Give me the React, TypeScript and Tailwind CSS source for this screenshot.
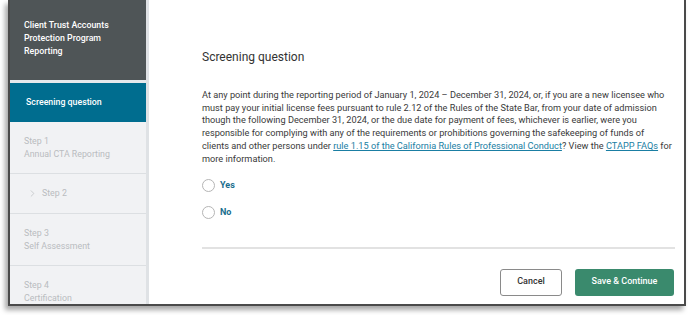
import React, { useState } from 'react';
import { ChevronRight } from 'lucide-react';

const steps = [
    { title: 'Step 1', sub: 'Annual CTA Reporting' },
    { title: 'Step 2', sub: '', chevron: true },
    { title: 'Step 3', sub: 'Self Assessment' },
    { title: 'Step 4', sub: 'Certification' },
];

const App: React.FC = () => {
    const [answer, setAnswer] = useState<'yes' | 'no' | null>(null);

    return (
        <div className="w-[688px] h-[315px] bg-white overflow-hidden font-['Roboto',sans-serif]">
            <div className="ml-[8px] w-[678px] h-[306px] flex border-x-2 border-b-2 border-[#4a4a4a] shadow-[-3px_4px_5px_rgba(0,0,0,0.35)] overflow-hidden">
                {/* Sidebar */}
                <div className="w-[139px] shrink-0 flex flex-col bg-[#f1f2f4] border-r-[3px] border-[#dfe2e5]">
                    <div className="h-[80px] shrink-0 bg-[#4f5557] pl-[14px] pt-[19px] text-[8.8px] leading-[13px] font-medium text-white">
                        Client Trust Accounts<br />Protection Program<br />Reporting
                    </div>
                    <div className="h-[3px] shrink-0 bg-[#e6e9ec]"></div>
                    <div className="h-[39px] shrink-0 bg-[#006d8f] pl-[16px] flex items-center text-[8.8px] font-medium text-white">
                        Screening question
                    </div>
                    {steps.map((s, idx) => (
                        <div
                            key={s.title}
                            className={`shrink-0 text-[8.8px] leading-[13px] text-[#b9bcbf] ${idx < steps.length - 1 ? 'border-b border-[#dcdfe2]' : ''} ${s.chevron ? 'h-[40px] flex items-center pl-[17px] gap-[4px]' : 'h-[52px] pl-[14px] pt-[13px]'}`}
                        >
                            {s.chevron && <ChevronRight className="w-[11px] h-[11px] text-[#b9bcbf]" strokeWidth={1.5} />}
                            <div>{s.title}</div>
                            {s.sub && <div>{s.sub}</div>}
                        </div>
                    ))}
                </div>

                {/* Main */}
                <div className="flex-1 bg-white pl-[53px] pr-[9px] pt-[48px]">
                    <h1 className="text-[12px] leading-[18px] text-[#333]">Screening question</h1>
                    <p className="mt-[23px] max-w-[471px] text-[9.2px] leading-[12.7px] text-[#3a3a3a]">
                        At any point during the reporting period of January 1, 2024 – December 31, 2024, or, if you are a new licensee who must pay your initial license fees pursuant to rule 2.12 of the Rules of the State Bar, from your date of admission though the following December 31, 2024, or the due date for payment of fees, whichever is earlier, were you responsible for complying with any of the requirements or prohibitions governing the safekeeping of funds of clients and other persons under{' '}
                        <a className="text-[#1a7ea3] underline">rule 1.15 of the California Rules of Professional Conduct</a>? View the{' '}
                        <a className="text-[#1a7ea3] underline">CTAPP FAQs</a> for more information.
                    </p>
                    <div className="mt-[14px] flex flex-col gap-[13px]">
                        {(['yes', 'no'] as const).map(v => (
                            <label key={v} className="flex items-center gap-[5px] cursor-pointer" onClick={() => setAnswer(v)}>
                                <span className="w-[13px] h-[13px] rounded-full border border-[#b5b5b5] bg-white flex items-center justify-center">
                                    {answer === v && <span className="w-[7px] h-[7px] rounded-full bg-[#1a6e8e]"></span>}
                                </span>
                                <span className="text-[9px] font-bold text-[#1a6e8e]">{v === 'yes' ? 'Yes' : 'No'}</span>
                            </label>
                        ))}
                    </div>
                    <div className="mt-[28px] h-[1.5px] bg-[#e2e2e2]"></div>
                    <div className="mt-[20px] flex justify-end gap-[13px] pr-[1px]">
                        <button className="w-[62px] h-[27px] rounded-[3px] border border-[#8a8a8a] bg-white text-[9px] font-medium text-[#333]">
                            Cancel
                        </button>
                        <button className="w-[99px] h-[27px] rounded-[3px] bg-[#3a8a6d] text-[9px] font-medium text-white">
                            Save &amp; Continue
                        </button>
                    </div>
                </div>
            </div>
        </div>
    );
};

export default App;
